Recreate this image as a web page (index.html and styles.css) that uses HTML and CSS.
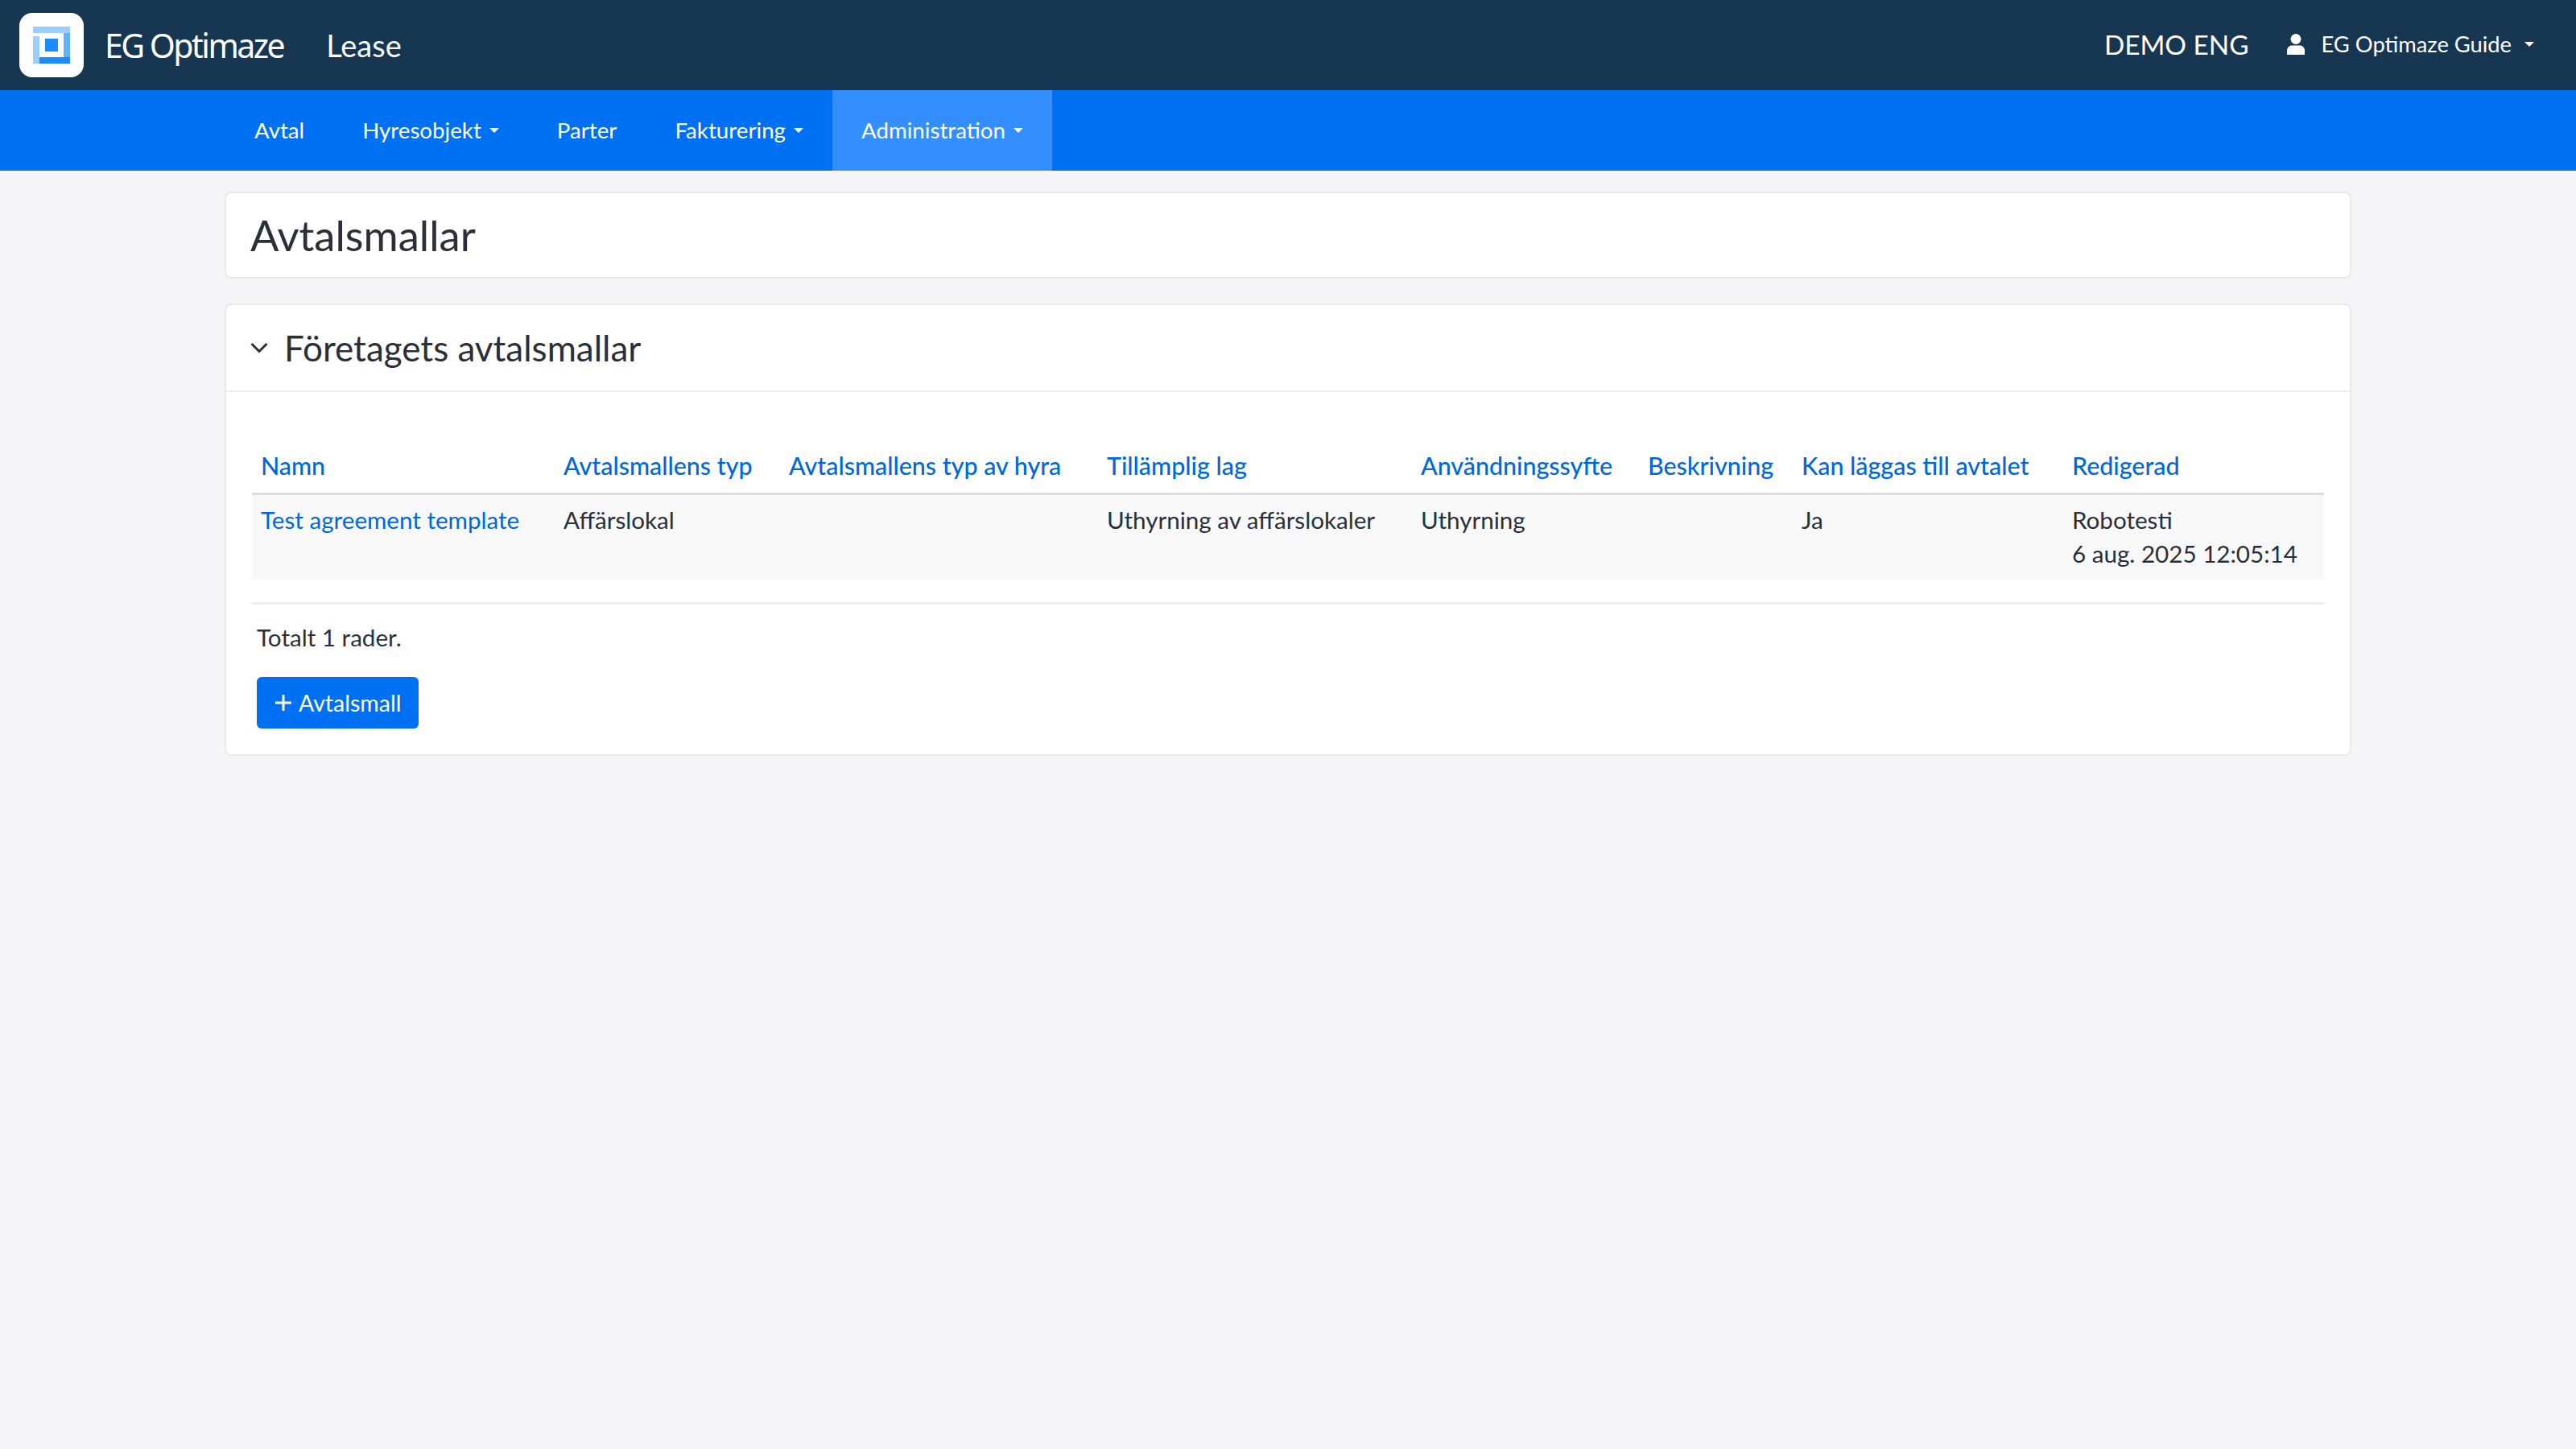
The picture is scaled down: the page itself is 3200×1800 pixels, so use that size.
FILE: index.html
```html
<!DOCTYPE html>
<html lang="sv">
<head>
  <meta charset="UTF-8">
  <title>Avtalsmallar</title>
  <link rel="stylesheet" href="styles.css">
</head>
<body>

<header class="topbar">
  <a class="logo" href="#">
    <svg viewBox="0 0 46 46" width="46" height="46">
      <path fill="#99ceff" d="M0 0h46v8H0zM0 12h8v34H0z"/>
      <path fill="#5cb3ff" d="M38 8h8v30h-8z"/>
      <path fill="#1a8cff" d="M8 38h38v8H8zM15 15h16v16H15z"/>
    </svg>
  </a>
  <span class="brand">EG Optimaze</span>
  <span class="product">Lease</span>
  <span class="client">DEMO ENG</span>
  <a class="user" href="#">
    <svg viewBox="0 0 24 26" width="24" height="26">
      <circle cx="12" cy="6.5" r="6.5" fill="#fff"/>
      <path fill="#fff" d="M1 26v-5c0-4 3-6.5 6-6.5h10c3 0 6 2.5 6 6.5v5z"/>
    </svg>
    <span class="user-name">EG Optimaze Guide</span>
    <span class="caret"></span>
  </a>
</header>

<nav class="menu">
  <a href="#">Avtal</a>
  <a href="#">Hyresobjekt<span class="caret"></span></a>
  <a href="#">Parter</a>
  <a href="#">Fakturering<span class="caret"></span></a>
  <a class="active" href="#">Administration<span class="caret"></span></a>
</nav>

<main class="content">
  <section class="card page-title">
    <h1>Avtalsmallar</h1>
  </section>

  <section class="card">
    <div class="card-head">
      <svg viewBox="0 0 22 14" width="22" height="14">
        <path fill="none" stroke="#2a2f3a" stroke-width="3" d="M1.5 2l9.5 9.5L20.5 2"/>
      </svg>
      <h2>Företagets avtalsmallar</h2>
    </div>
    <div class="card-body">
      <table class="grid">
        <thead>
          <tr>
            <th class="c-name"><a href="#">Namn</a></th>
            <th class="c-type"><a href="#">Avtalsmallens typ</a></th>
            <th class="c-rent"><a href="#">Avtalsmallens typ av hyra</a></th>
            <th class="c-law"><a href="#">Tillämplig lag</a></th>
            <th class="c-use"><a href="#">Användningssyfte</a></th>
            <th class="c-desc"><a href="#">Beskrivning</a></th>
            <th class="c-add"><a href="#">Kan läggas till avtalet</a></th>
            <th><a href="#">Redigerad</a></th>
          </tr>
        </thead>
        <tbody>
          <tr>
            <td><a href="#">Test agreement template</a></td>
            <td>Affärslokal</td>
            <td></td>
            <td>Uthyrning av affärslokaler</td>
            <td>Uthyrning</td>
            <td></td>
            <td>Ja</td>
            <td>Robotesti<br>6 aug. 2025 12:05:14</td>
          </tr>
        </tbody>
      </table>
      <hr class="rule">
      <p class="total">Totalt 1 rader.</p>
      <button class="btn-add" type="button">
        <svg viewBox="0 0 22 22" width="22" height="22">
          <path fill="none" stroke="#fff" stroke-width="3" d="M11 1v20M1 11h20"/>
        </svg>
        Avtalsmall
      </button>
    </div>
  </section>
</main>

</body>
</html>
```

FILE: styles.css
```css
body {
  margin: 0;
  min-height: 1800px;
  background: #f5f5f8;
  color: #2a2f3a;
  font-family: "Lato", "Noto Sans", sans-serif;
  font-size: 29.6px;
  line-height: 42px;
}

a {
  color: #0067db;
  text-decoration: none;
}

.topbar {
  display: flex;
  align-items: center;
  height: 112px;
  padding: 0 52px 0 24px;
  background: #163651;
  color: #fff;
}

.logo {
  display: flex;
  align-items: center;
  justify-content: center;
  width: 80px;
  height: 80px;
  background: #fff;
  border-radius: 16px;
}

.brand {
  margin-left: 26px;
  font-family: "Noto Sans", sans-serif;
  font-size: 41px;
  letter-spacing: -2.5px;
}

.product {
  margin-left: 53px;
  font-size: 38px;
}

.client {
  margin-left: auto;
  margin-top: -2px;
  font-size: 33.3px;
}

.user {
  display: flex;
  align-items: center;
  margin-left: 46px;
  margin-top: -2px;
  color: #fff;
  font-size: 27.3px;
}

.user-name {
  margin-left: 20px;
}

.caret {
  display: inline-block;
  margin-left: 10px;
  vertical-align: middle;
  border-top: 6px solid #fff;
  border-left: 6px solid transparent;
  border-right: 6px solid transparent;
}

.user .caret {
  margin-left: 16px;
}

.menu {
  display: flex;
  height: 100px;
  padding: 0 280px;
  background: #0070f2;
  font-size: 27.7px;
}

.menu a {
  display: flex;
  align-items: center;
  padding: 0 36px;
  color: #fff;
}

.menu a.active {
  background: #338fff;
}

.content {
  display: flex;
  flex-direction: column;
  gap: 31px;
  margin: 26px 279px 0;
}

.card {
  background: #fff;
  border: 2px solid #e8e9eb;
  border-radius: 8px;
}

.page-title {
  padding: 24px 30px;
}

h1 {
  margin: 0;
  font-size: 52.5px;
  font-weight: 400;
  line-height: 56px;
}

.card-head {
  display: flex;
  align-items: center;
  gap: 20px;
  height: 106px;
  padding: 0 30px;
  border-bottom: 2px solid #eeeff1;
}

h2 {
  margin: 0;
  font-size: 44px;
  font-weight: 400;
}

.card-body {
  padding: 58px 32px 32px;
}

.grid {
  width: 100%;
  table-layout: fixed;
  border-collapse: collapse;
}

.grid th,
.grid td {
  box-sizing: border-box;
  padding: 12px 11px;
  text-align: left;
  vertical-align: top;
}

.grid th {
  padding-bottom: 13px;
  border-bottom: 3px solid #dddddd;
  font-size: 30.4px;
  font-weight: 500;
  white-space: nowrap;
}

.grid td {
  padding-top: 10px;
  padding-bottom: 11px;
  background: #f8f8f9;
}

.c-name { width: 376px; }
.c-type { width: 280px; }
.c-rent { width: 395px; }
.c-law { width: 390px; }
.c-use { width: 282px; }
.c-desc { width: 191px; }
.c-add { width: 336px; }

.rule {
  margin: 28px 0 0;
  border: 0;
  border-top: 3px solid #eeeff1;
}

.total {
  margin: 20px 0 28px 6px;
}

.btn-add {
  display: flex;
  align-items: center;
  gap: 8px;
  height: 64px;
  margin-left: 6px;
  padding: 0 22px;
  background: #0070f2;
  border: 0;
  border-radius: 6px;
  color: #fff;
  font-family: inherit;
  font-size: 28.5px;
}
```
